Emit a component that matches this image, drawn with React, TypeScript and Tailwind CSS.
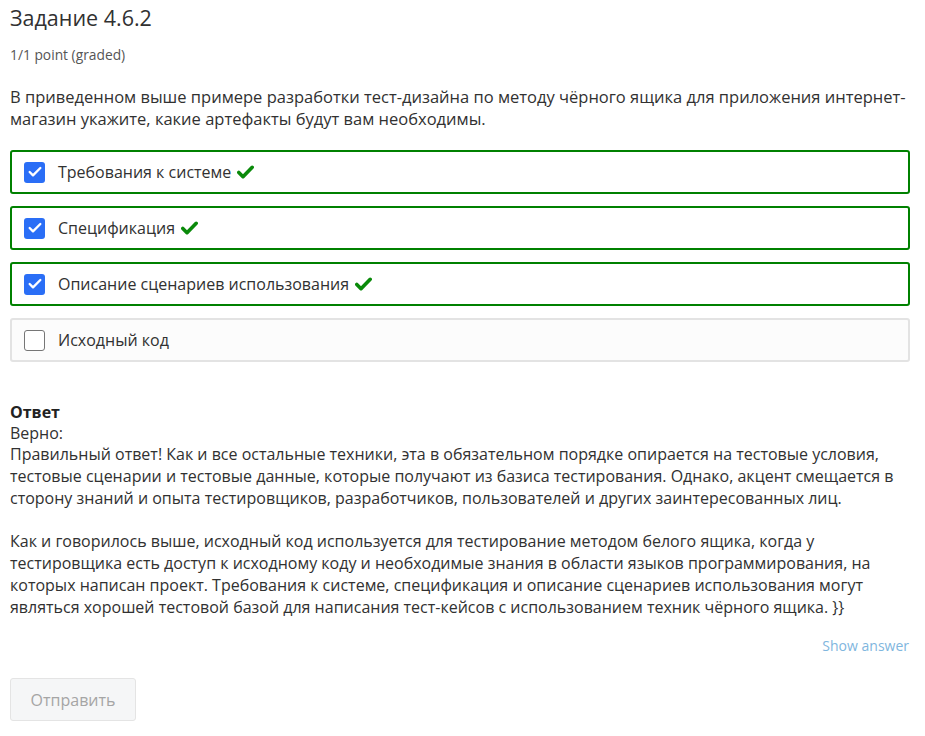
import { Check } from "lucide-react";

const options = [
  { label: "Требования к системе", checked: true },
  { label: "Спецификация", checked: true },
  { label: "Описание сценариев использования", checked: true },
  { label: "Исходный код", checked: false },
];

const secondPara =
  "Как и говорилось выше, исходный код используется для тестирование методом белого ящика, когда у тестировщика есть доступ к исходному коду и необходимые знания в области языков программирования, на которых написан проект. Требования к системе, спецификация и описание сценариев использования могут являться хорошей тестовой базой для написания тест-кейсов с использованием техник чёрного ящика. }}";

function GreenTick() {
  return (
    <svg width="17" height="14" viewBox="0 0 17 14" className="ml-[6px] inline-block">
      <path d="M1.8 7.5 L6 11.7 L15.2 2.3" fill="none" stroke="#0a8a0a" strokeWidth="3.6" strokeLinecap="round" strokeLinejoin="round" />
    </svg>
  );
}

export default function App() {
  return (
    <main className="min-h-screen bg-white text-[#313131]" style={{ fontFamily: '"Open Sans", "Noto Sans", sans-serif' }}>
      <div className="ml-[10px] w-[900px] pt-[3px]">
        <h2 className="text-[21.5px] leading-[30px] text-[#313131]">Задание 4.6.2</h2>
        <p className="mt-[13px] text-[13.8px] leading-[18px] text-[#555]">1/1 point (graded)</p>

        <p className="mt-[22px] text-[16.5px] leading-[22px]">
          В приведенном выше примере разработки тест-дизайна по методу чёрного ящика для приложения интернет-магазин укажите, какие артефакты будут вам необходимы.
        </p>

        <div className="mt-[20px] flex flex-col gap-[12px]">
          {options.map((o) => (
            <label
              key={o.label}
              className={
                o.checked
                  ? "flex h-[44px] items-center rounded-[3px] border-2 border-[#008100] bg-white px-[12px]"
                  : "flex h-[44px] items-center rounded-[3px] border-2 border-[#e3e3e3] bg-[#fcfcfc] px-[12px]"
              }
            >
              {o.checked ? (
                <span className="flex h-[21px] w-[21px] items-center justify-center rounded-[3px] bg-[#2a6ef6]">
                  <Check size={16} strokeWidth={3.5} color="#fff" />
                </span>
              ) : (
                <span className="h-[21px] w-[21px] rounded-[3px] border border-[#767676] bg-white" />
              )}
              <span className="ml-[13px] flex items-center text-[16px] leading-[22px] text-[#313131]">
                {o.label}
                {o.checked && <GreenTick />}
              </span>
            </label>
          ))}
        </div>

        <div className="mt-[39px] text-[16px] leading-[22px]">
          <p className="font-bold text-[#222]">Ответ</p>
          <p className="leading-[20px]">Верно:</p>
          <p>
            Правильный ответ! Как и все остальные техники, эта в обязательном порядке опирается на тестовые условия, тестовые сценарии и тестовые данные, которые получают из базиса тестирования. Однако, акцент смещается в сторону знаний и опыта тестировщиков, разработчиков, пользователей и других заинтересованных лиц.
          </p>
          <p className="mt-[21px]">{secondPara}</p>
        </div>

        <div className="mt-[18px] flex justify-end pr-[1px]">
          <span className="text-[14px] leading-[20px] text-[#7fb6de]">Show answer</span>
        </div>

        <button className="mt-[22px] h-[43px] w-[126px] rounded-[3px] border border-[#e4e4e4] bg-[#f5f6f7] text-[16px] text-[#a5a5a5]">
          Отправить
        </button>
      </div>
    </main>
  );
}
